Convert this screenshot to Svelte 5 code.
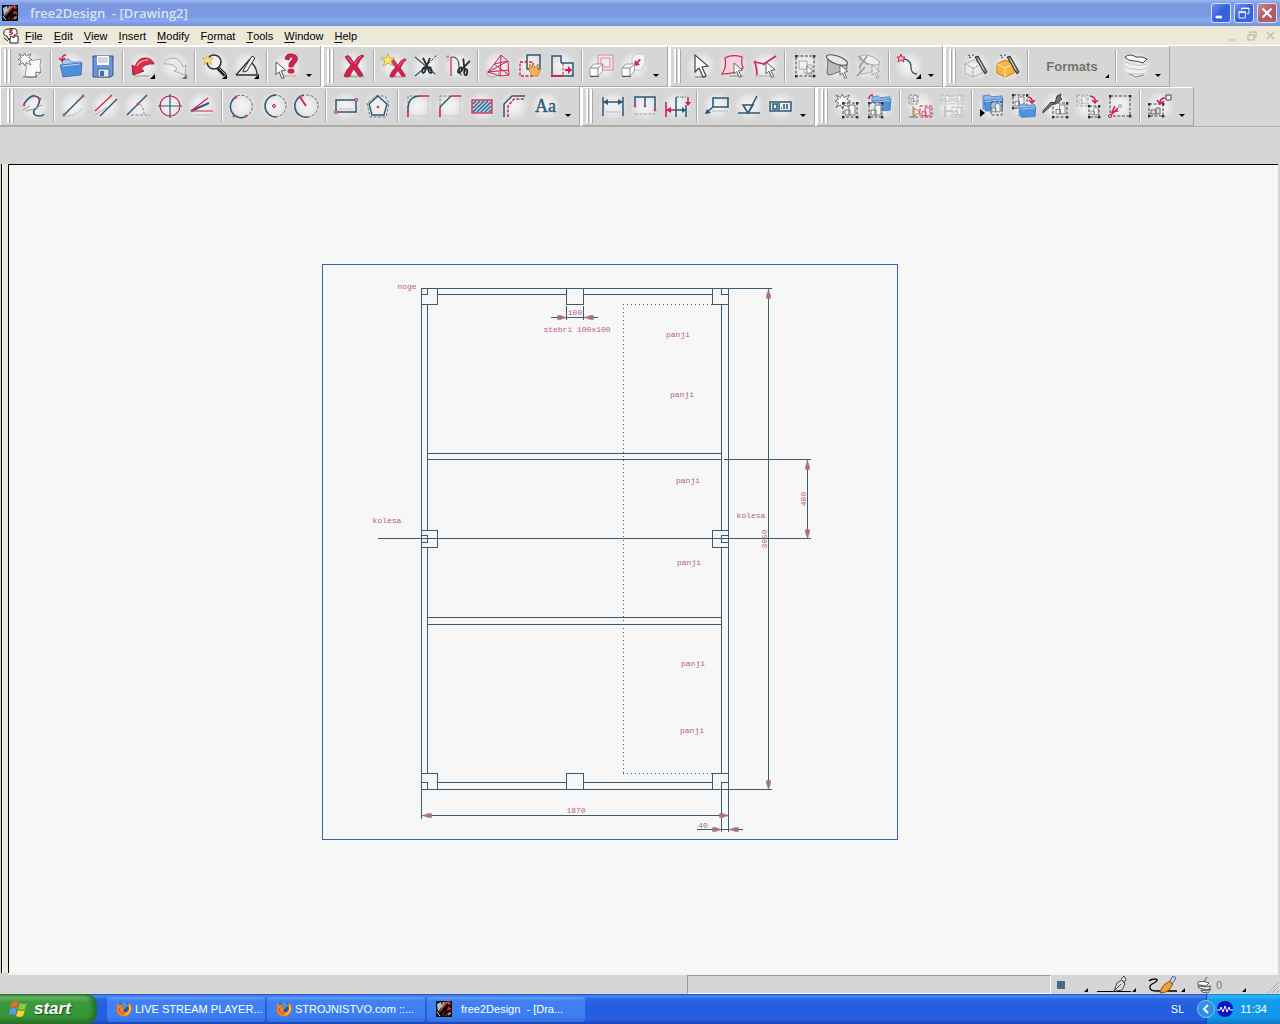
<script>
  const N = '#2b5a78';
  const R = '#d3204c';

  const line = (d, color = N, width = 1.5, extra = '') =>
    `<path d="${d}" fill="none" stroke="${color}" stroke-width="${width}" ${extra}/>`;
  const dash = (d, color = '#444', width = 1) => line(d, color, width, 'stroke-dasharray="3 1.5"');
  const dot = (x, y, r = 1.5) =>
    `<circle cx="${x}" cy="${y}" r="${r}" fill="#f3b9c6" stroke="${R}" stroke-width="1"/>`;
  const handles = (x1, y1, x2, y2) =>
    [[x1, y1], [x2, y1], [x1, y2], [x2, y2]]
      .map(([x, y]) => `<rect x="${x - 1}" y="${y - 1}" width="2.4" height="2.4" fill="#333"/>`)
      .join('');
  const corner = '<path d="M24 20v5h-5z" fill="#000"/>';
  const cross = (x, y, s) =>
    `<g transform="translate(${x} ${y}) scale(${s})"><path d="M3 22.500h19" stroke="#aaa" stroke-width="2"/><path d="M3 3Q6 0 8 3l4 6q3-7 8-8l2 1q-4 3-7 10l6 9q-3 3-5 0l-4-6q-3 3-4 7-3 2-6 0 2-6 7-11z" fill="${R}" stroke="#a3183a" stroke-width=".8"/><path d="M5 3q2 0 5 6M19 2q-4 3-6 8" stroke="#f76d8b" fill="none"/></g>`;
  const star = (x, y, s = 1) =>
    `<path transform="translate(${x} ${y}) scale(${s})" d="M6 0l2 4 5 0-4 3 2 5-5-3-5 3 2-5-4-3 5 0z" fill="#fbe272" stroke="#c2a14a" stroke-width=".8"/>`;
  const burst = (x, y, s = 1) =>
    `<path transform="translate(${x} ${y}) scale(${s})" d="M7 0l2 4 6-3-3 5 4 2-4 2 3 5-6-3-2 4-2-4-5 3 3-5-4-2 4-2-3-5 5 3z" fill="#fff" stroke="#555" stroke-width=".9"/>`;
  const arrow = (x, y, s = 1, fill = '#fff') =>
    `<path transform="translate(${x} ${y}) scale(${s})" d="M0 0v17l4-4 4 9 3-1-4-9 6-1z" fill="${fill}" stroke="#444" stroke-width="1.2"/>`;
  const folder = (x, y, s = 1) =>
    `<g transform="translate(${x} ${y}) scale(${s})"><path d="M0 2l7-1 2 2 11-1v14H0z" fill="#8ab8ec" stroke="#3a6fb8" stroke-width=".8"/><path d="M1 7l20-2-1 12-17 1z" fill="#4f92e0" stroke="#3a6fb8" stroke-width=".8"/><path d="M2 8l18-2" stroke="#b5d6f8"/></g>`;
  const block = (x, y, s = 1, c = '#777') =>
    `<path transform="translate(${x} ${y}) scale(${s})" d="M4 1h6v10H4zM0 6h5v5H0z" fill="#f4f4f4" stroke="${c}" stroke-width="1"/>`;
  const cube = (x, y) =>
    `<path transform="translate(${x} ${y})" d="M0 4l4-4h9l-1 8-4 4H0z" fill="#fdfdfd" stroke="#888" stroke-width=".8"/><path transform="translate(${x} ${y})" d="M0 4h8v8M8 4l5-4" fill="none" stroke="#888"/><path d="M${x} ${y + 12.5}h9" stroke="#555"/>`;
  const scissors = (x, y) =>
    `<g transform="translate(${x} ${y})" stroke="#2a2a2a" fill="none"><path d="M1 0l6 12M8 0L3 12" stroke-width="1.800"/><ellipse cx="2" cy="12" rx="1.500" ry="3" stroke-width="1.800" transform="rotate(20 2 12)"/><ellipse cx="8" cy="12" rx="1.500" ry="3" stroke-width="1.800" transform="rotate(-15 8 12)"/></g>`;
  const wand = `<path d="M11 3l3-1 9 16-2 2z" fill="#777" stroke="#333"/><path d="M14 5l6 11" stroke="#ddd"/><path d="M4 1l2 1M9 0v2M5 4l2-1" stroke="#444"/>`;

  const icons = {
    new: `<path d="M7 6q8 1 15-1-2 7 0 13l-5 5q-5 1-11-1 2-8 1-16z" fill="#fafafa" stroke="#999"/><path d="M22 18q-3 1-5 0v5M4 23h14" fill="none" stroke="#666"/>` + burst(0, -1, 0.8),
    open: `<path d="M3 6l7-1 2 3h10v12H5z" fill="#a8c9ef" stroke="#4b80c5" stroke-width=".8"/><path d="M1 11l22-2-1 12-18 2z" fill="#4f8edb" stroke="#3568b2" stroke-width=".8"/><path d="M3 12l18-2" stroke="#bfdcfa"/><path d="M7 1Q3 1 3 6M0 4l3 3 3-3" fill="none" stroke="${R}" stroke-width="1.5"/>`,
    save: `<path d="M2 2h20v19l-2 2H2z" fill="#6d95dc" stroke="#2c4f9a"/><path d="M6 2h12v9H6z" fill="#fff"/><path d="M7 4h10M7 6h10M7 8h10" stroke="#aac"/><path d="M7 15h11v8H7z" fill="#dce6f5" stroke="#567"/><path d="M9 17h4v5H9z" fill="#3a6cc0"/>`,
    undo: `<path d="M3 22h15" stroke="#bbb" stroke-width="2"/><path d="M1 11l1 10 11-4-3-2Q14 9 23 10 21 4 14 4 7 4 4 13z" fill="#dd2c4c" stroke="#a3183a"/><path d="M6 12Q9 6 17 6" fill="none" stroke="#ff9bab" stroke-width="1.5"/>` + corner,
    redo: `<path d="M23 11l-1 10-11-4 3-2Q10 9 1 10 3 4 10 4q7 0 10 9z" fill="#e8e8e8" stroke="#aaa"/><path d="M24 20v5h-5z" fill="#777"/>`,
    zoom: `<circle cx="11" cy="8" r="7" fill="#f2f2f2" stroke="#333" stroke-width="1.6"/><path d="M15 14l7 7" stroke="#222" stroke-width="4"/><path d="M16 14l6 6" stroke="#bbb"/>` + star(0, 1, 0.8) + corner,
    measure: line('M1 21L15 5M1 21h21M17 9q5 5 5 12', '#333', 1.3) + `<path d="M9 15l8-13 3 2-8 13-4 1z" fill="#eee" stroke="#333"/>` + corner,
    help: `<path d="M10 5Q11-1 17 0q7 1 5 7-3 3-4 6h-4q-1-4 3-7 2-3-1-3-2 0-2 3z" fill="${R}" stroke="#a3183a" stroke-width=".8"/><ellipse cx="16" cy="17" rx="3.500" ry="2.600" fill="${R}"/><path d="M5 22h16" stroke="#aaa"/>` + arrow(1, 8, 0.75),
    erase: cross(0, 0, 1),
    eraseNew: cross(6, 4, 0.83) + star(0, 0, 1),
    trim: line('M1 3l20 17', N, 1.2) + line('M1 22L13 12', N, 1.2) + dash('M14 10l9-9') + dash('M16 15l7 6', '#888') + scissors(8, 4),
    split: line('M5 3v19', R, 1.2) + dash('M0 3h8M2 1v6', '#888') + line('M6 3q7 0 7 9t3 9', N, 1.2) + '<g transform="rotate(20 17 14)">' + scissors(13, 5) + '</g>',
    mesh: line('M2 18L15 1l7 6 1 14-9 1zM2 18l21-2M8 10l14-3M15 1l-1 21M8 10l15 11M2 18l20-11', R, 1) + '<ellipse cx="7" cy="19" rx="6" ry="4" fill="none" stroke="#888" stroke-width=".7"/>',
    move: line('M9 1h13v14H9z') + dash('M2 8h13v14H2z', R, 1.3) + `<path d="M11 16l1-6 2 4 1-5 2 5 3-4 0 6 3-2-3 8h-6z" fill="#f3b066" stroke="#b8742f" stroke-width=".8"/>`,
    stretch: line('M2 22V2h9v7') + line('M1 22h12', R, 2) + line('M11 9h12v13H13', N) + dash('M13 9v13', R) + `<path d="M15 15h3v-3l4 4-4 4v-3h-3z" fill="${R}"/>`,
    copy: `<path d="M8 1h15v15H8z" fill="#f6e6ea" stroke="#d08a9c"/><path d="M11 4h9v9h-9z" fill="#eee" stroke="#d08a9c"/>` + cube(0, 10),
    scale: `<path d="M10 4l4-4h9v9l-4 7h-9z" fill="#f4f4f4" stroke="#c4c4c4"/><path d="M19 6l-3 3 2 2-6 1 1-6 2 2 2-3z" fill="${R}"/>` + cube(0, 10),
    select: '<path d="M6 23h11" stroke="#777"/>' + arrow(6, 1),
    selectFace: `<path d="M4 4q7-4 17-1-1 6 1 11-8 6-21 6 5-7 3-16z" fill="#f8d5dd" stroke="${R}" stroke-width="1.200"/><path d="M8 22h14" stroke="#888"/>` + arrow(13, 9, 0.65),
    selectChain: line('M4 21Q4 15 2 8l9 2 12-8', R, 1.6) + dot(2, 8, 1) + dot(11, 10, 1) + '<path d="M2 22h18" stroke="#aaa"/>' + arrow(13, 8, 0.7),
    box: dash('M3 2h18v20H3z') + handles(3, 2, 21, 22) + '<path d="M6 7h8v8H6zM14 11h5v8h-8v-4" fill="#eee" stroke="#aaa"/>' + arrow(14, 12, 0.5),
    lasso: `<path d="M3 4L2 20q3 2 6 0l14-5V9z" fill="#bbb" stroke="#555" stroke-width=".8"/><ellipse cx="12" cy="6" rx="11" ry="4" fill="#e8e8e8" stroke="#555" transform="rotate(20 12 6)"/>` + arrow(15, 11, 0.6),
    lassoNew: '<path d="M3 4L3 20l8-1 11-4V9z" fill="#e0e0e0" stroke="#aaa" stroke-width=".8"/><ellipse cx="13" cy="6" rx="10" ry="4" fill="#efefef" stroke="#aaa" transform="rotate(20 13 6)"/><path d="M1 2l10 9M10 2L2 14M0 22l8-9" stroke="#999" stroke-width="1.500"/><g opacity=".5">' + arrow(15, 11, 0.6) + '</g>',
    point: line('M7 5q7 1 7 8t6 7', N, 1.3) + `<path d="M4 0l1 3 3 0-2 2 1 3-3-2-3 2 1-3-2-2 3 0z" fill="#f6c7d1" stroke="${R}"/>` + corner,
    solidNew: '<path d="M1 10l8-4 9 4v9l-9 4-8-4zM1 10l8 4 9-4M9 14v9" fill="#e8e8e8" stroke="#999" stroke-dasharray="2 1"/>' + wand,
    solid: '<path d="M1 10l8-4 9 4v9l-9 4-8-4z" fill="#fdb43c" stroke="#c97a08"/><path d="M1 10l8 4 9-4M9 14v9" fill="none" stroke="#fff0b8"/>' + wand,
    layers: '<path d="M2 9h20v11l-4 2-7 1-9-4z" fill="#efefef"/><path d="M2 8q4 3 9 2 3 3 11 0M2 13q5 3 9 2 4 2 11-1M2 18q5 3 9 2 4 1 11-1" fill="none" stroke="#c0c0c0"/><path d="M5 20l7 3 8-2" fill="none" stroke="#888"/><path d="M1 3q5-4 11 0 6-1 11 2l-4 4q-5-2-9-2-6 0-9-4z" fill="#fafafa" stroke="#444"/>',
    spline: line('M2 10Q8 1 13 2q6 1 4 7T12 16q-2 6 6 6 3 0 4-2', N, 1.6) + line('M1 16l7-4M4 17q8-1 16-6', '#999', 1) + dot(2, 11, 1) + dot(11, 2, 1) + dot(18, 5, 1),
    line: '<path d="M5 22q9 0 16-8" fill="none" stroke="#bbb"/>' + line('M2 21L21 2') + dot(2, 21, 1) + dot(21, 2, 1),
    parallel: line('M1 17L18 1', R, 1.2) + line('M6 22L23 5') + line('M1 21l12-8', '#aaa', 1),
    angle: line('M1 21L21 1') + dash('M5 21h19', '#888') + dash('M14 10q4 4 4 10', '#888') + dot(12, 10, 1),
    circle: `<circle cx="12" cy="12" r="10" fill="none" stroke="${R}" stroke-width="1.200"/>` + line('M12 0v24M0 12h24', N, 1.2),
    bisect: line('M1 17L19 9', N, 2) + line('M1 17L18 4M1 17h22', R, 1.1) + line('M5 21h15', '#bbb', 1),
    arc3: dash('M7 2a11 11 0 1 1 8 21', '#666') + line('M6 3a11 11 0 0 0 9 20') + dot(6, 3, 1) + dot(4, 22, 1) + dot(16, 22, 1),
    arcCenter: dash('M12 1a11 11 0 0 1 2 22', '#666') + line('M14 1a11 11 0 1 0 0 22') + dot(12, 12),
    arcRadius: dash('M12 1a11 11 0 0 1 2 22', '#666') + line('M10 1a11 11 0 1 0 4 22') + line('M6 3l6 9', R, 1.8) + dot(6, 3, 1),
    rect: line('M2 6h20v12H2z') + line('M5 15h14', '#bbb', 1) + dot(2, 18) + dot(22, 6),
    polygon: dash('M12 1L1 9l3 14h16l3-14L19 2H8', '#777') + line('M12 2l9 8-3 11H6L3 10z', N, 1.4) + dot(12, 13, 1),
    fillet: dash('M2 14V2h10', '#888') + line('M2 18Q1 2 14 2') + line('M2 23v-6M13 2h10', R, 1.6) + line('M5 22h17M22 4v18', '#ccc', 1),
    chamfer: dash('M2 12V2h10', '#888') + line('M2 13L13 2') + line('M2 23V13M13 2h10', R, 1.6) + line('M5 22h17M22 4v18', '#ccc', 1),
    hatch: `<rect x="2" y="6" width="20" height="13" fill="#c5d5df" stroke="${R}" stroke-width="1.3"/>` + line('M3 10l3-3M3 14l7-7M3 18L14 7M7 18L18 7M11 18L21 8M15 18l6-6M19 18l2-2', '#2b6288', 1.4),
    offset: line('M2 23V10l8-8h13') + dash('M6 23V12l6-7h11', R, 1.5),
    text: `<text class="aa" x="1" y="18">Aa</text>`,
    dimLinear: line('M2 3v19M22 3v19M2 8h20') + `<path d="M2 8l5-3v6zM22 8l-5-3v6z" fill="${N}"/>` + line('M5 18h14', '#bbb', 1),
    dimChain: line('M2 11V3h20v13M12 3v9') + dot(2, 12, 1) + dot(12, 12, 1) + dot(22, 16, 1) + dash('M2 20h20', '#999'),
    dimStep: line('M1 8v15M1 16h10', R, 1.6) + line('M11 3v20M21 11v12M11 16h10', N) + dash('M11 3h10', '#2a8a7a') + line('M23 3v8', R, 1.5) + `<path d="M1 16l5-3v6zM20 8h6l-3 4z" fill="${R}"/><path d="M21 16l-4-3v6z" fill="${N}"/>`,
    leader: line('M1 19L8 13V4h15v9H8', N, 1.6) + `<path d="M0 20l6-1-4-4z" fill="${N}"/>` + line('M7 17h16', '#bbb', 1),
    rough: line('M6 11h10l-5 8zM11 19L20 2M1 19h22', N, 1.6),
    tolerance: line('M1 8h21v9H1zM10 8v9M4 10h4v5H4zM12 14h1M15 10v5M18 10v5', N, 1.5),
    partNew: burst(0, 0, 0.9) + dash('M7 9h14v14H7z') + block(9, 10, 1) + handles(7, 9, 21, 23),
    partOpen: folder(4, 1, 0.9) + '<path d="M1 9h13v14H1z" fill="#e6e6e6"/>' + dash('M1 9h13v14H1z') + handles(1, 9, 14, 23) + block(3, 10, 1) + line('M5 1Q1 1 1 5', R, 1.5),
    partSplit: dash('M1 1h9v9H1z', '#888') + block(3, 1, 0.6) + dash('M12 12h12v11H12z', R) + block(14, 13, 0.8, R) + line('M1 23h9', '#666', 1) + line('M5 12v11', '#888', 1) + line('M6 14l6 4-6 4z', '#c0762c', 1),
    partGrid: dash('M1 1h10v9H1zM13 1h10v9H13zM12 13h11v10H12z', '#b5b5b5') + block(3, 1, 0.6, '#aaa') + block(15, 1, 0.6, '#aaa') + block(14, 13, 0.7, '#aaa') + line('M5 12v11M5 17h7', '#aaa', 1),
    partLoad: folder(3, 0, 0.95) + '<path d="M11 8h11v12H11z" fill="#e6e6e6" opacity=".6"/>' + dash('M11 8h11v13H11z') + block(12, 9, 0.8) + '<path d="M0 15l5 4-5 4z" fill="#000"/>',
    partSave: dash('M1 1h14v13H1z') + handles(1, 1, 15, 14) + block(3, 2, 0.9) + folder(7, 9, 0.8) + line('M16 3q5 1 4 5M17 6l3 3 3-3', R, 1.6),
    partEdit: dash('M9 9h14v14H9z') + block(12, 10, 0.9) + handles(9, 9, 23, 23) + '<path d="M-1 17L7 8l4 1 2-7 4-2-1 4 2 1-6 5-3 0-10 9z" fill="#777" stroke="#222" stroke-width=".8"/>',
    partCopy: dash('M1 1h11v11H1z', '#999') + block(3, 2, 0.7, '#aaa') + dash('M13 12h10v11H13z') + handles(13, 12, 23, 23) + block(15, 13, 0.7) + line('M14 2q6 1 5 6M16 6l3 3 3-3', R, 1.5),
    partBase: dash('M2 2h20v20H2z') + handles(2, 2, 22, 22) + line('M10 14l-7 7M7 12l-3 6 6-1', R, 1.6) + dot(2, 22) + '<circle cx="12" cy="12" r="1.5" fill="#eee" stroke="#999"/>',
    partPlace: dash('M1 10h14v12H1z') + '<path d="M3 16h5v4H3zM8 14h4v6H8z" fill="#ddd" stroke="#666"/><path d="M18 1h5v5h-5z" fill="#eee" stroke="#444"/>' + handles(1, 10, 15, 22) + line('M17 4q-5 0-5 5M9 6l3 4 4-3', R, 1.6)
  };

  const toolbars = [
    [
      [['new'], ['open', 'save'], ['undo', 'redo'], ['zoom', 'measure'], ['help']],
      [['erase'], ['eraseNew', 'trim', 'split'], ['mesh', 'move', 'stretch'], ['copy', 'scale']],
      [['select', 'selectFace', 'selectChain'], ['box', 'lasso', 'lassoNew'], ['point']],
      [['solidNew', 'solid'], ['Formats'], ['layers']]
    ],
    [
      [
        ['spline'],
        ['line', 'parallel', 'angle', 'circle', 'bisect'],
        ['arc3', 'arcCenter', 'arcRadius'],
        ['rect', 'polygon'],
        ['fillet', 'chamfer', 'hatch', 'offset', 'text']
      ],
      [['dimLinear', 'dimChain', 'dimStep'], ['leader', 'rough', 'tolerance']],
      [
        ['partNew', 'partOpen'],
        ['partSplit', 'partGrid'],
        ['partLoad', 'partSave', 'partEdit', 'partCopy', 'partBase'],
        ['partPlace']
      ]
    ]
  ];

  // label and position of its accelerator letter
  const menu = [
    ['File', 0],
    ['Edit', 0],
    ['View', 0],
    ['Insert', 0],
    ['Modify', 0],
    ['Format', 1],
    ['Tools', 0],
    ['Window', 0],
    ['Help', 0]
  ];

  // [x, y, text, rotated]
  const labels = [
    [407, 289, 'noge'],
    [575, 315, '100'],
    [577, 332, 'stebri 100x100'],
    [678, 337, 'panji'],
    [682, 397, 'panji'],
    [688, 483, 'panji'],
    [689, 565, 'panji'],
    [693, 666, 'panji'],
    [692, 733, 'panji'],
    [387, 523, 'kolesa'],
    [751, 518, 'kolesa'],
    [576, 813, '1870'],
    [703, 828, '40'],
    [767, 539, '3050', true],
    [806, 499, '480', true]
  ];

  // dimension arrows: tip and direction in degrees
  const arrows = [
    [768, 289, -90],
    [768, 789, 90],
    [807, 460, -90],
    [807, 538, 90],
    [422, 815, 180],
    [728, 815, 0],
    [566, 317, 0],
    [584, 317, 180],
    [721, 829, 0],
    [729, 829, 180]
  ];

  const tasks = [
    ['fox', 'LIVE STREAM PLAYER...'],
    ['fox', 'STROJNISTVO.com ::...'],
    ['app', 'free2Design  - [Dra...']
  ];
</script>

{#snippet appIcon()}
  <svg class="small-icon" viewBox="0 0 16 16" aria-hidden="true">
    <rect width="16" height="16" fill="#111" />
    <path d="M1 3l4-2 1 4-4 6zM7 1l4 1-5 9-3 3z" fill="#a9c5cb" />
    <path d="M9 1l4-1 2 3-4 2-5 6-3 0zM12 6l3 1-1 5-5 3-3-2 5-2z" fill="#d23a35" />
    <path d="M3 14L12 3M8 14l6-5" stroke="#000" stroke-width="2" />
    <path d="M1 11l3 4M12 14l3-2" stroke="#c7e0e0" />
  </svg>
{/snippet}

{#snippet foxIcon()}
  <svg class="small-icon" viewBox="0 0 16 16" aria-hidden="true">
    <circle cx="8" cy="8" r="7" fill="#2c57a6" />
    <path d="M6 1q6 0 6 4l-3 2-4-1z" fill="#5a8fd0" />
    <path d="M1 2l2 2 3-1-1 3 4 1-2 2 1 2 3 0 2-3-1-4 1-2q4 3 2 9-3 5-8 4.500-5-.5-6.500-6z" fill="#ee8420" />
    <path d="M13 3q3 4 1 8-3 4-7 3 5-1 6-5z" fill="#fdc93b" />
    <path d="M3 7q0 5 5 6" fill="none" stroke="#c8501a" />
  </svg>
{/snippet}

<div class="screen">
  <header class="titlebar">
    {@render appIcon()}
    <h1>free2Design&nbsp; - [Drawing2]</h1>
    <button class="win" aria-label="Minimize">
      <svg viewBox="0 0 20 20"><path d="M4 13h7v3H4z" fill="#fff" /></svg>
    </button>
    <button class="win" aria-label="Restore">
      <svg viewBox="0 0 20 20" fill="none" stroke="#fff"><path d="M7.500 7V4.500h8v6H13M7 5h9M4.500 8.500h7v7h-7zM4 9.500h8" /></svg>
    </button>
    <button class="win close" aria-label="Close">
      <svg viewBox="0 0 20 20"><path d="M5 5l10 10M15 5L5 15" stroke="#fff" stroke-width="2.200" /></svg>
    </button>
  </header>

  <nav class="menubar">
    <svg class="small-icon" viewBox="0 0 16 16" aria-hidden="true">
      <path d="M7 8h8v7H7z" fill="#fff" stroke="#222" />
      <path d="M1 4q0-3 5-3 7-2 8 2 1 4-3 4v3l-3-2-2 4-2-4Q0 8 1 4z" fill="#fff" stroke="#222" />
      <path d="M6 2h3L7 4q3 0 2 2L6 7" fill="none" stroke="#c22" stroke-width="1.400" />
      <path d="M1 10l4 3" stroke="#222" />
    </svg>
    {#each menu as [label, key]}
      <button>{label.slice(0, key)}<u>{label[key]}</u>{label.slice(key + 1)}</button>
    {/each}
    <div class="doc-buttons">
      <button aria-label="Minimize drawing"><svg viewBox="0 0 12 12"><path d="M2 10h6" /></svg></button>
      <button aria-label="Restore drawing"><svg viewBox="0 0 12 12"><path d="M4 4V2h6v5H8M2 5h6v5H2z" /></svg></button>
      <button aria-label="Close drawing"><svg viewBox="0 0 12 12"><path d="M2 2l7 7M9 2L2 9" /></svg></button>
    </div>
  </nav>

  <div class="toolbars">
    {#each toolbars as groups, row}
      <div class="toolbar" class:second={row == 1}>
        {#each groups as parts}
          <div class="group">
            <span class="grip"></span>
            {#each parts as part, i}
              {#if i > 0}<span class="sep"></span>{/if}
              {#each part as name}
                {#if icons[name]}
                  <button class="tool" aria-label={name}>
                    <svg viewBox="0 0 24 24">{@html icons[name]}</svg>
                  </button>
                {:else}
                  <button class="formats">{name}<i class="corner"></i></button>
                {/if}
              {/each}
            {/each}
            <button class="more" aria-label="More tools"></button>
          </div>
        {/each}
      </div>
    {/each}
  </div>

  <main>
    <svg class="drawing" role="img" aria-label="Drawing2">
      <g transform="translate(-9 -165)">
        <rect class="sheet" x="322.5" y="264.5" width="575" height="575" />
        <g class="lines">
          <!-- frame -->
          <path d="M421.500 288V819M728.500 288V832M421 288.500H772M421 789.500H772" />
          <path d="M427.500 304V530M427.500 547V773M721.500 304V530M721.500 547V773" />
          <path d="M437 294.500H566M583 294.500H712M437 782.500H566M583 782.500H712" />
          <path d="M427 453.500H721M427 459.500H721M724 459.500H811M427 617.500H721M427 624.500H721" />
          <!-- posts -->
          <path d="M421 304.500H437.500V288M566.500 288V304.500H583.500V288M712.500 288V304.500H729" />
          <path d="M421 530.500H437.500V547.500H421M729 530.500H712.500V547.500H729" />
          <path d="M421 773.500H437.500V789M566.500 789V773.500H583.500V789M712.500 789V773.500H729" />
          <path d="M421 294.500H427.500V288M721.500 288V294.500H729M421 535.500H427.500V542.500H421" />
          <path d="M729 535.500H721.500V542.500H729M421 782.500H427.500V789M729 782.500H721.500V832" />
          <!-- axis and dimensions -->
          <path d="M378 538.500H811M768.500 288V789M807.500 459V538M421 815.500H728" />
          <path d="M566.500 306V320M583.500 306V320M551 317.500H598M697 829.500H743" />
          <path class="dotted" d="M623.500 304V773M623 304.500H712M623 773.500H712" />
        </g>
        {#each arrows as [x, y, turn]}
          <path class="tip" d="M0 0L-6-2V2zM-6-2h-3v4h3" transform="translate({x} {y}) translate(.5 .5) rotate({turn})" />
        {/each}
        {#each labels as [x, y, text, rotated]}
          <text transform="translate({x} {y}) rotate({rotated ? -90 : 0})">{text}</text>
        {/each}
      </g>
    </svg>
  </main>

  <footer class="status">
    <output class="field"></output>
    <button class="color" aria-label="Colour"><span></span><i class="corner"></i></button>
    <button class="pen" aria-label="Line width">
      <svg viewBox="0 0 44 18">
        <path d="M2 15.500h34" stroke="#000" />
        <path d="M19 15l3-8 5-3 3 4-3 6-6 1zM26 3l3-3 2 3-2 4M20 14l6-6" fill="#ddd" stroke="#444" />
        <path d="M41 12v4h-4z" />
      </svg>
    </button>
    <button class="pen" aria-label="Line type">
      <svg viewBox="0 0 44 18">
        <path d="M4 5q2-2 7-2 3 1-2 4-5 2-4 5 0 3 7 3h20" fill="none" stroke="#000" stroke-width="1.300" />
        <path d="M15 17q2-7 4-8l6-4 3 3-4 6q-3 3-9 3z" fill="#f3a032" stroke="#8d5410" />
        <path d="M25 5l3-5 3 2-4 6z" fill="#c5dcf5" stroke="#557" />
        <path d="M40 12v4h-4z" />
      </svg>
    </button>
    <button class="layer" aria-label="Layer">
      <svg viewBox="0 0 18 18">
        <path d="M3 6q5-2 11 1l-3 3q-4-1-8-1zM3 10l8 1 5-1-3 4-9-2zM6 14l6 1 4-2-3 4-6-1z" fill="#fff" stroke="#555" />
        <path d="M9 6l3-5" stroke="#555" />
      </svg>
      <span>0</span><i class="corner"></i>
    </button>
    <svg class="resize" viewBox="0 0 14 14" aria-hidden="true"><path d="M2 13L13 2M6 13l7-7M10 13l3-3" stroke="#aaa" /></svg>
  </footer>

  <div class="taskbar">
    <button class="start">
      <svg viewBox="0 0 20 20" aria-hidden="true">
        <path d="M3 3q4-2 7 0L8 9Q5 7 1 9z" fill="#ee6430" />
        <path d="M11 4q4 2 7 0l-2 6q-3 2-7 0z" fill="#8ccb3e" />
        <path d="M1 10q4-2 7 0l-2 6q-3-2-6 0z" fill="#5b9bf0" />
        <path d="M9 11q4 2 7 0l-2 6q-3 2-7 0z" fill="#fbd13c" />
      </svg>
      start
    </button>
    {#each tasks as [icon, label]}
      <button class="task" class:app={icon == 'app'}>
        {#if icon == 'app'}{@render appIcon()}{:else}{@render foxIcon()}{/if}
        <span>{label}</span>
      </button>
    {/each}
    <span class="lang">SL</span>
    <div class="tray">
      <button class="chevron" aria-label="Show hidden icons">
        <svg viewBox="0 0 18 18"><circle cx="9" cy="9" r="8.500" fill="#2f8fe6" stroke="#7cc4f5" /><path d="M11 5L7 9l4 4" fill="none" stroke="#fff" stroke-width="2" /></svg>
      </button>
      <svg class="wave" viewBox="0 0 16 16" aria-hidden="true">
        <circle cx="8" cy="8" r="8" fill="#0612c8" />
        <path d="M0 9h3l1-3 2 5 2-6 2 6 2-5 1 3h3" fill="none" stroke="#fff" />
      </svg>
      <time>11:34</time>
    </div>
  </div>
</div>

<style>
  :global(body) {
    margin: 0;
  }
  .screen {
    display: flex;
    flex-direction: column;
    min-height: 100vh;
    background: #d6d6d6;
    font-family: 'Liberation Sans', Arial, sans-serif;
    font-size: 11px;
    color: #000;
  }
  button {
    display: flex;
    align-items: center;
    margin: 0;
    padding: 0;
    border: 0;
    background: none;
    font: inherit;
    color: inherit;
  }
  .small-icon {
    width: 16px;
    height: 16px;
    flex: none;
  }

  .titlebar {
    display: flex;
    align-items: center;
    gap: 3px;
    height: 26px;
    padding: 0 3px 0 2px;
    background: linear-gradient(#9db9f0 0, #8aa6ea 2px, #7b97e0 5px, #7b98e2 15px, #86a9ee 21px, #7d97df 24px, #7b93d8);
  }
  h1 {
    flex: 1;
    margin: 0 0 0 9px;
    font: 600 13px 'Open Sans', sans-serif;
    color: #d8e4f8;
  }
  .win {
    width: 20px;
    height: 20px;
    box-sizing: border-box;
    border: 1px solid #d5def7;
    border-radius: 3px;
    background: linear-gradient(135deg, #6e90ee, #3560dc 50%, #3c68e0);
  }
  .win svg {
    width: 18px;
    height: 18px;
  }
  .win.close {
    background: linear-gradient(135deg, #c98a96, #b25a66 50%, #b05c68);
  }

  .menubar {
    display: flex;
    align-items: center;
    gap: 1px;
    height: 20px;
    padding-left: 3px;
    background: #ece9d8;
    box-shadow: inset 0 -1px #fff;
  }
  .menubar > button {
    height: 20px;
    padding: 0 5px;
  }
  .menubar u {
    text-underline-offset: 2px;
  }
  .doc-buttons {
    display: flex;
    gap: 7px;
    margin-left: auto;
    padding-right: 3px;
  }
  .doc-buttons svg {
    width: 12px;
    height: 12px;
    fill: none;
    stroke: #c4c1b2;
    stroke-width: 1.5px;
  }

  .toolbars {
    padding-bottom: 37px;
  }
  .toolbar {
    display: flex;
    gap: 3px;
    height: 41px;
  }
  .toolbar.second {
    height: 39px;
    border-bottom: 1px solid #b3b0a6;
  }
  .toolbar.second .group:first-child .grip {
    margin-left: 3px;
  }
  .group {
    display: flex;
    align-items: center;
    margin-right: -1px;
    border-right: 1px solid #aaa79c;
    border-bottom: 1px solid #aaa79c;
    box-shadow: inset 1px 1px #fff, 2px 0 #fff;
  }
  .grip {
    width: 7px;
    height: 34px;
    padding: 0 4px;
    background: linear-gradient(90deg, #fff 2px, #aaa 2px 3px, #d6d6d6 3px 4px, #fff 4px 6px, #aaa 6px) content-box;
  }
  .group:last-child {
    box-shadow: inset 1px 1px #fff;
  }
  .sep {
    width: 8px;
    height: 32px;
    background: linear-gradient(90deg, transparent 3px, #aaa 3px 4px, #fff 4px 5px, transparent 5px);
  }
  .tool {
    justify-content: center;
    width: 32px;
    height: 32px;
    background: radial-gradient(#f4f4f4 0, #ececec 30%, #d6d6d6 66%);
  }
  .tool svg {
    width: 24px;
    height: 24px;
    overflow: visible;
  }
  .tool :global(.aa) {
    font-family: 'Liberation Serif', serif;
    font-size: 18px;
    fill: #2b5a78;
    stroke: #2b5a78;
    stroke-width: 0.4px;
  }
  .formats {
    position: relative;
    justify-content: center;
    width: 80px;
    height: 32px;
    font-size: 13px;
    font-weight: bold;
    color: #77736b;
  }
  .corner {
    border-left: 4px solid transparent;
    border-bottom: 4px solid #000;
  }
  .formats .corner {
    position: absolute;
    right: 3px;
    bottom: 4px;
  }
  .more {
    justify-content: center;
    align-items: flex-end;
    width: 17px;
    height: 32px;
    padding-right: 5px;
    padding-bottom: 5px;
    box-sizing: border-box;
  }
  .more::after {
    content: '';
    border: 3px solid transparent;
    border-top-color: #000;
    border-bottom: 0;
  }

  main {
    display: flex;
    flex: 1;
    margin-right: 2px;
    border-top: 1px solid #000;
    border-left: 1px solid #000;
    background: #f7f7f7;
    margin-left: 8px;
    box-shadow: -5px 0 #ece9d8, -6px 0 #fff, -7px 0 #000, 0 2px #f4f3ee;
  }
  .drawing {
    flex: 1;
    min-width: 0;
    min-height: 700px;
  }
  .sheet {
    fill: none;
    stroke: #3a62ab;
  }
  .lines {
    fill: none;
    stroke: #3d5a73;
    shape-rendering: crispEdges;
  }
  .dotted {
    stroke-dasharray: 1 3;
  }
  .tip {
    fill: #a8747e;
    stroke: #a8747e;
    stroke-width: 0.5px;
  }
  .drawing text {
    font-family: 'Liberation Mono', monospace;
    font-size: 8px;
    text-anchor: middle;
    fill: #b8626c;
  }

  .status {
    display: flex;
    align-items: stretch;
    height: 19px;
    padding-top: 2px;
  }
  .field {
    width: 362px;
    margin-left: auto;
    border: 1px solid #fff;
    border-top-color: #999;
    border-left-color: #999;
  }
  .color {
    gap: 19px;
    padding: 0 7px 0 6px;
  }
  .color span {
    width: 8px;
    height: 8px;
    background: #4c6780;
  }
  .color .corner,
  .layer .corner {
    align-self: flex-end;
    margin-bottom: 2px;
  }
  .pen svg {
    width: 44px;
    height: 18px;
    margin-right: 6px;
  }
  .layer {
    color: #777;
  }
  .layer svg {
    width: 18px;
    height: 18px;
    margin-right: 3px;
  }
  .layer .corner {
    margin-left: 20px;
  }
  .resize {
    align-self: flex-end;
    width: 14px;
    height: 14px;
    margin-left: 20px;
  }

  .taskbar {
    display: flex;
    align-items: center;
    height: 30px;
    color: #fff;
    background: linear-gradient(#1f49c0 0, #4a8cf2 2px, #2b66e4 5px, #245cdc 14px, #2560e2 25px, #1b45b4);
  }
  .start {
    gap: 5px;
    width: 97px;
    height: 30px;
    margin-right: 10px;
    padding-left: 9px;
    box-sizing: border-box;
    border-radius: 0 10px 10px 0;
    background: linear-gradient(#2f7a30 0, #6cb868 3px, #3d9a3c 8px, #379437 22px, #2a7429);
    box-shadow: inset -4px 0 5px #236b24;
    font-size: 17px;
    font-weight: bold;
    font-style: italic;
    text-shadow: 1px 1px 1px #1c4a1c;
  }
  .start svg {
    width: 20px;
    height: 20px;
  }
  .task {
    flex: 0 1 158px;
    min-width: 0;
    gap: 3px;
    height: 25px;
    margin-right: 2px;
    padding: 0 2px 0 9px;
    box-sizing: border-box;
    border-radius: 3px;
    background: linear-gradient(#5f9cfa 0, #4080f2 4px, #3c7ef2 20px, #3370e0);
    white-space: pre;
  }
  .task.app {
    gap: 9px;
  }
  .lang {
    margin-left: auto;
    padding-right: 22px;
  }
  .tray {
    display: flex;
    align-items: center;
    gap: 2px;
    height: 30px;
    padding-right: 13px;
    border-left: 1px solid #0b4fa8;
    background: linear-gradient(#1280d0 0, #30b8f8 2px, #149cec 6px, #1194e8 24px, #0f74c4);
  }
  .chevron {
    margin-left: -10px;
  }
  .chevron svg {
    width: 18px;
    height: 18px;
  }
  .wave {
    width: 16px;
    height: 16px;
  }
  time {
    margin-left: 5px;
  }
</style>
